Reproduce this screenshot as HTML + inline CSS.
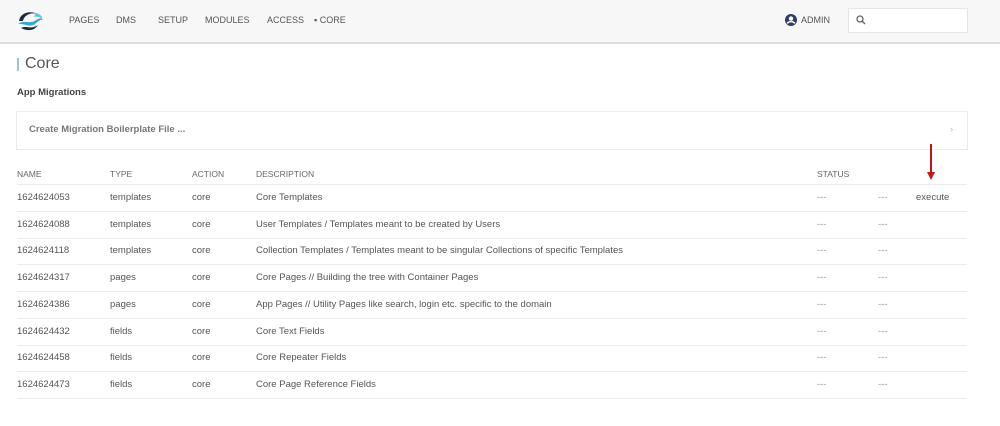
<!DOCTYPE html>
<html><head><style>
body{margin:0;width:1000px;height:426px;background:#fff;font-family:"Liberation Sans",sans-serif;color:#555;overflow:hidden;position:relative}
.hdr{position:absolute;left:0;top:0;width:1000px;height:42px;background:#f7f7f7;border-bottom:2px solid #dcdde3}
.nav{position:absolute;top:15px;font-size:9px;color:#555}
.search{position:absolute;left:848px;top:8px;width:118px;height:23px;background:#fff;border:1px solid #e6e6e6}
.t{position:absolute;font-size:9.5px;white-space:nowrap}
.line{position:absolute;left:17px;width:950px;height:1px;background:#ebebeb}
</style></head><body>
<div class="hdr">
<svg style="position:absolute;left:16px;top:9px" width="28" height="24" viewBox="0 0 28 24">
<path d="M3 12 C4 4 14 1 21 5 C15 3 8 6 7 12 Z" fill="#1b2b3c"/>
<path d="M2 15 C8 10 14 16 20 11 C23 9 26 9 27 11 C24 10 22 13 19 15 C13 19 8 14 2 15Z" fill="#3aa7c9"/>
<path d="M5 19 C10 16 15 21 22 16 C19 21 13 23 5 19Z" fill="#1b2b3c"/>
<path d="M20 4 C24 5 27 8 26 10 C24 8 21 7 18 8Z" fill="#5ec3de"/>
</svg>
<div class="nav" style="left:69px">PAGES</div>
<div class="nav" style="left:116px">DMS</div>
<div class="nav" style="left:158px">SETUP</div>
<div class="nav" style="left:205px">MODULES</div>
<div class="nav" style="left:267px">ACCESS</div>
<div class="nav" style="left:314px">▪ CORE</div>
<svg style="position:absolute;left:785px;top:14px" width="12" height="12" viewBox="0 0 12 12"><circle cx="6" cy="6" r="6" fill="#2c3e66"/><circle cx="6" cy="4.6" r="2.2" fill="#fff"/><path d="M2.3 9.5 C3.5 7 8.5 7 9.7 9.5" stroke="#fff" stroke-width="1.6" fill="none"/></svg>
<div class="nav" style="left:801px">ADMIN</div>
<div class="search"><svg style="position:absolute;left:7px;top:6px" width="10" height="10" viewBox="0 0 10 10"><circle cx="4" cy="4" r="3" stroke="#666" stroke-width="1.3" fill="none"/><path d="M6.3 6.3 L9 9" stroke="#666" stroke-width="1.4"/></svg></div>
</div>
<div style="position:absolute;left:17px;top:58px;width:2px;height:13px;background:#a9bfd6"></div>
<div class="t" style="left:25px;top:55px;font-size:16px;color:#555">Core</div>
<div class="t" style="left:17px;top:87px;font-weight:bold;color:#444">App Migrations</div>
<div style="position:absolute;left:16px;top:111px;width:950px;height:37px;border:1px solid #ececec"></div>
<div class="t" style="left:29px;top:124px;font-weight:bold;color:#777">Create Migration Boilerplate File ...</div>
<div class="t" style="left:950px;top:124px;color:#bbb">›</div>
<div class="t" style="left:17px;top:169px;font-size:8.5px;color:#666">NAME</div>
<div class="t" style="left:110px;top:169px;font-size:8.5px;color:#666">TYPE</div>
<div class="t" style="left:192px;top:169px;font-size:8.5px;color:#666">ACTION</div>
<div class="t" style="left:256px;top:169px;font-size:8.5px;color:#666">DESCRIPTION</div>
<div class="t" style="left:817px;top:169px;font-size:8.5px;color:#666">STATUS</div>
<div style="position:absolute;left:930px;top:144px;width:1.5px;height:30px;background:#c0161b"></div>
<svg style="position:absolute;left:927px;top:172px" width="8" height="8"><path d="M0 0 L8 0 L4 8Z" fill="#c0161b"/></svg>
<div class="line" style="top:184px"></div>
<div id="rows"></div>
<script>
var d=[["1624624053","templates","Core Templates"],["1624624088","templates","User Templates / Templates meant to be created by Users"],["1624624118","templates","Collection Templates / Templates meant to be singular Collections of specific Templates"],["1624624317","pages","Core Pages // Building the tree with Container Pages"],["1624624386","pages","App Pages // Utility Pages like search, login etc. specific to the domain"],["1624624432","fields","Core Text Fields"],["1624624458","fields","Core Repeater Fields"],["1624624473","fields","Core Page Reference Fields"]];
var h="";d.forEach(function(r,i){var y=192+i*26.7;
h+='<div class="t" style="left:17px;top:'+y+'px">'+r[0]+'</div><div class="t" style="left:110px;top:'+y+'px">'+r[1]+'</div><div class="t" style="left:192px;top:'+y+'px">core</div><div class="t" style="left:256px;top:'+y+'px">'+r[2]+'</div><div class="t" style="left:817px;top:'+y+'px;color:#999">---</div><div class="t" style="left:878px;top:'+y+'px;color:#999">---</div>'+(i==0?'<div class="t" style="left:916px;top:'+y+'px">execute</div>':'')+'<div class="line" style="top:'+Math.round(211+i*26.7)+'px"></div>';});
document.getElementById("rows").innerHTML=h;
</script>
</body></html>
